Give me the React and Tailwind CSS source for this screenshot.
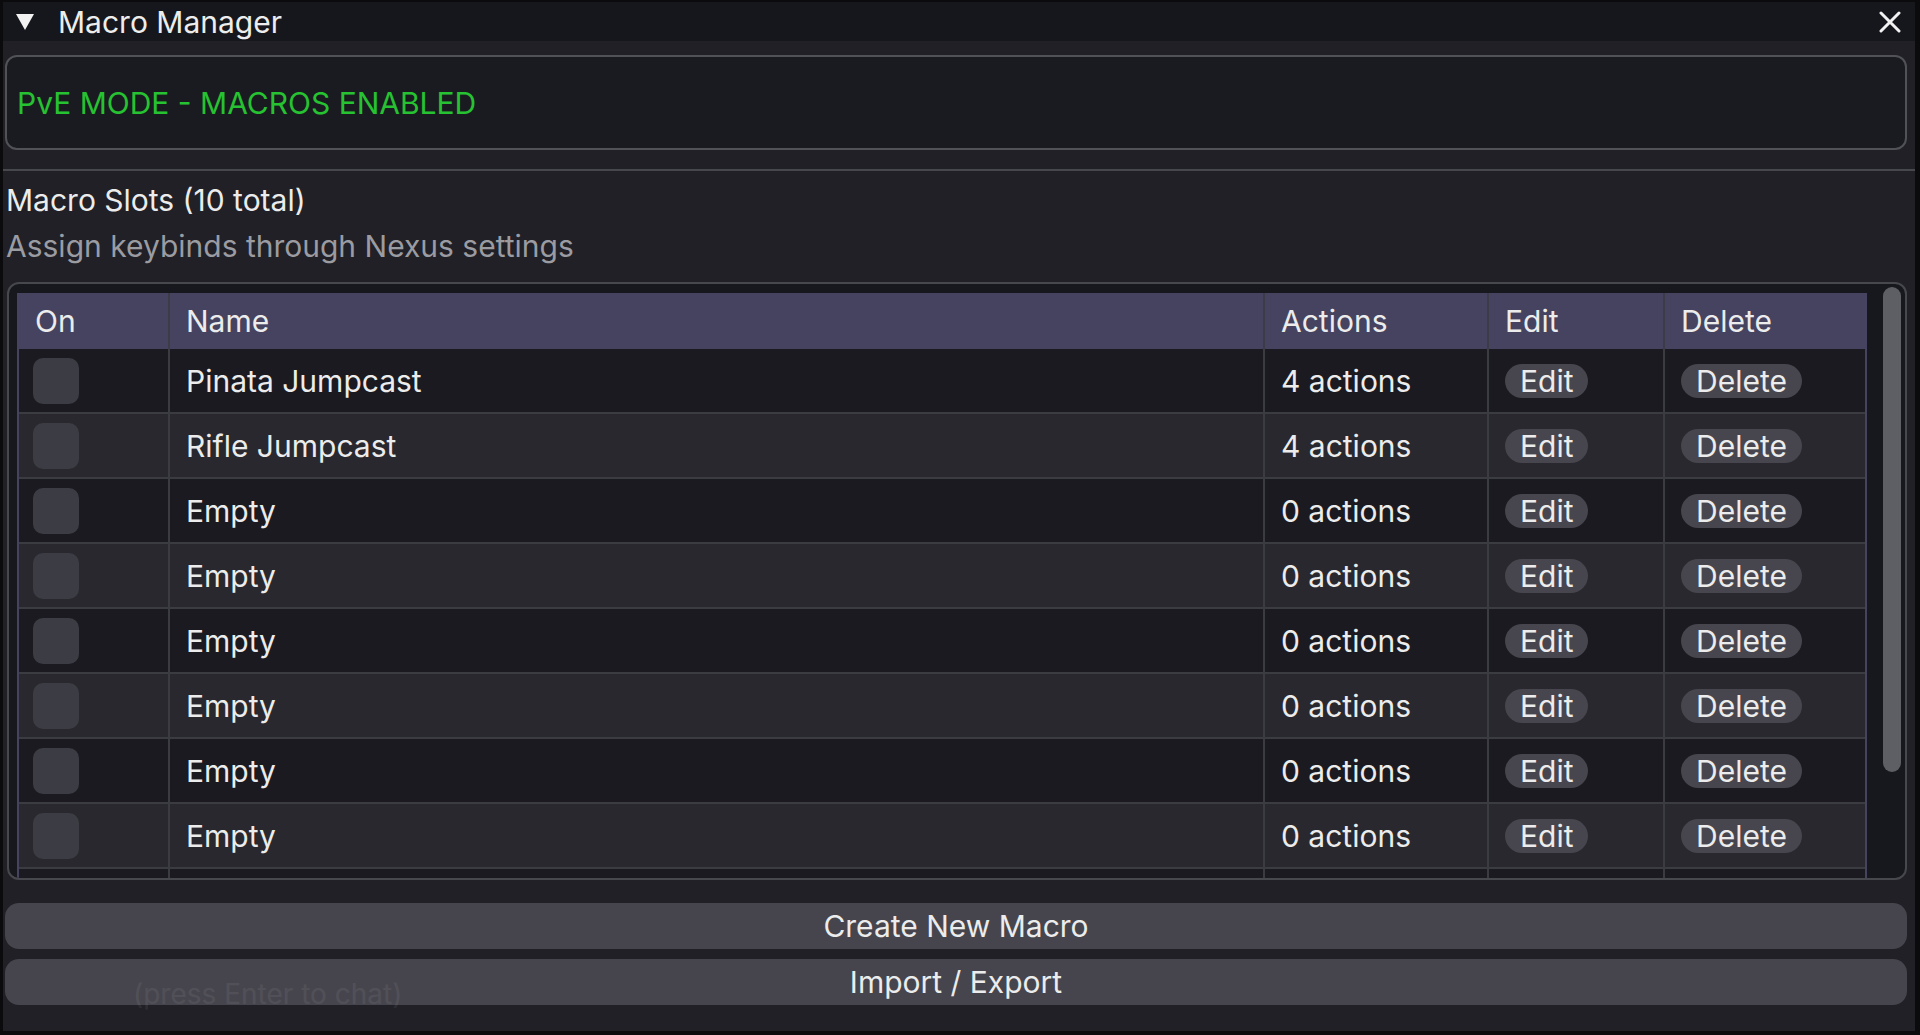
import React from "react";

const rows = [
  { name: "Pinata Jumpcast", actions: "4 actions" },
  { name: "Rifle Jumpcast", actions: "4 actions" },
  { name: "Empty", actions: "0 actions" },
  { name: "Empty", actions: "0 actions" },
  { name: "Empty", actions: "0 actions" },
  { name: "Empty", actions: "0 actions" },
  { name: "Empty", actions: "0 actions" },
  { name: "Empty", actions: "0 actions" },
];

function Row({ r, i }) {
  const bg = i % 2 === 0 ? "bg-[#1a1a20]" : "bg-[#28282e]";
  return (
    <div className={`grid grid-cols-[151px_1095px_224px_176px_200px] h-[65px] border-b-2 border-[#3b3b42] ${bg}`}>
      <div className="flex items-center pl-[14px] border-r-2 border-[#3b3b42]">
        <div className="w-[46px] h-[46px] rounded-[10px] bg-[#3c3c44]" />
      </div>
      <div className="flex items-center pl-[16px] border-r-2 border-[#3b3b42]">{r ? r.name : null}</div>
      <div className="flex items-center pl-[16px] border-r-2 border-[#3b3b42]">{r ? r.actions : null}</div>
      <div className="flex items-center pl-[16px] border-r-2 border-[#3b3b42]">
        {r ? <div className="h-[34px] px-[15px] rounded-full bg-[#47464e] flex items-center">Edit</div> : null}
      </div>
      <div className="flex items-center pl-[16px]">
        {r ? <div className="h-[34px] px-[15px] rounded-full bg-[#47464e] flex items-center">Delete</div> : null}
      </div>
    </div>
  );
}

export default function App() {
  return (
    <div
      className="w-[1920px] h-[1035px] bg-[#0b0b0d] relative overflow-hidden text-[30px] text-[#ececec] leading-none"
      style={{ fontFamily: "Inter, 'Noto Sans', sans-serif" }}
    >
      <div className="absolute left-[3px] top-[2px] w-[1912px] h-[1029px] bg-[#202026] flex flex-col">
        {/* title bar */}
        <div className="h-[39px] bg-[#16171c] flex items-center relative">
          <svg className="ml-[12px]" width="20" height="18" viewBox="0 0 20 18">
            <polygon points="1,1 19,1 10,17" fill="#f2f2f2" />
          </svg>
          <span className="ml-[23px] text-[#ededed]">Macro Manager</span>
          <div className="flex-1" />
          <svg className="mr-[14px]" width="22" height="22" viewBox="0 0 22 22">
            <path d="M2 2 L20 20 M20 2 L2 20" stroke="#f2f2f2" strokeWidth="3" strokeLinecap="round" />
          </svg>
        </div>

        <div className="flex flex-col pl-[2px] pr-[8px]">
          {/* mode box */}
          <div className="mt-[14px] h-[95px] rounded-[12px] border-2 border-[#515158] bg-[#1a1b21] flex items-center pl-[10px]">
            <span className="text-[#27c231]">PvE MODE - MACROS ENABLED</span>
          </div>
        </div>

        <div className="mt-[19px] h-[2px] bg-[#47474e]" />

        <div className="flex flex-col pl-[2px] pr-[8px]">
          <div className="mt-[17px] h-[24px] flex items-center pl-[1px]">Macro Slots (10 total)</div>
          <div className="mt-[22px] h-[24px] flex items-center pl-[1px] text-[#9b9ba2]">
            Assign keybinds through Nexus settings
          </div>

          {/* table container */}
          <div className="mt-[24px] ml-[2px] h-[598px] rounded-[12px] border-2 border-[#47474e] bg-[#17181d] flex overflow-hidden">
            <div className="pl-[8px] pt-[9px] w-[1858px] overflow-hidden">
              <div className="w-[1850px] border-x-2 border-[#45435f]">
                <div className="grid grid-cols-[151px_1095px_224px_176px_200px] h-[56px] bg-[#45435f]">
                  <div className="flex items-center pl-[16px] border-r-2 border-[#3c3c48]">On</div>
                  <div className="flex items-center pl-[16px] border-r-2 border-[#3c3c48]">Name</div>
                  <div className="flex items-center pl-[16px] border-r-2 border-[#3c3c48]">Actions</div>
                  <div className="flex items-center pl-[16px] border-r-2 border-[#3c3c48]">Edit</div>
                  <div className="flex items-center pl-[16px]">Delete</div>
                </div>
                {rows.map((r, i) => (
                  <Row key={i} r={r} i={i} />
                ))}
                <Row r={null} i={8} />
              </div>
            </div>
            <div className="flex-1 pt-[3px]">
              <div className="ml-[16px] w-[18px] h-[485px] rounded-full bg-[#5e5e65]" />
            </div>
          </div>

          {/* buttons */}
          <div className="mt-[23px] h-[46px] rounded-[14px] bg-[#46454d] flex items-center justify-center">
            Create New Macro
          </div>
          <div className="mt-[10px] h-[46px] rounded-[14px] bg-[#46454d] flex items-center justify-center">
            Import / Export
          </div>
        </div>
        <div className="absolute left-[130px] top-[978px] text-[28px] text-[#ffffff] opacity-[0.06] pointer-events-none">
          (press Enter to chat)
        </div>
      </div>
    </div>
  );
}
